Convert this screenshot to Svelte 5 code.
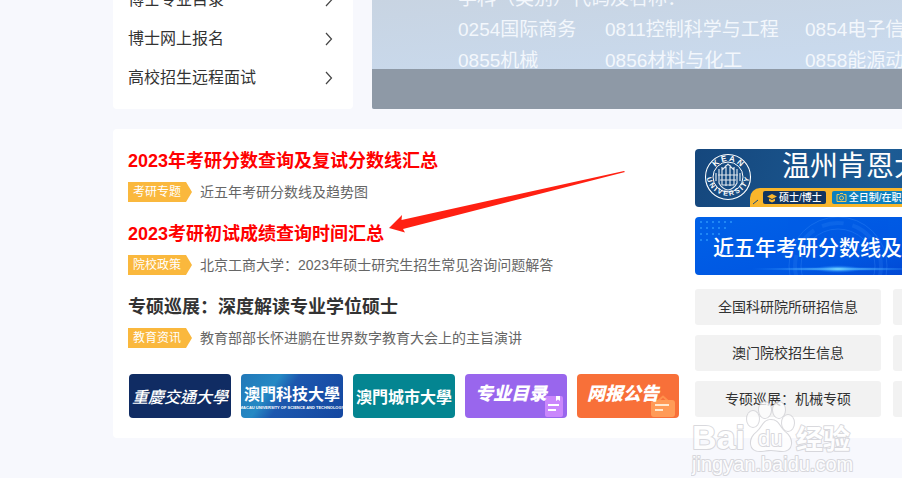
<script>
  const menu = ['博士专业目录', '博士网上报名', '高校招生远程面试'];
  const subjects = ['0254国际商务', '0811控制科学与工程', '0854电子信息', '0855机械', '0856材料与化工', '0858能源动力'];
  const articles = [
    { title: '2023年考研分数查询及复试分数线汇总', tag: '考研专题', text: '近五年考研分数线及趋势图', hot: true },
    { title: '2023考研初试成绩查询时间汇总', tag: '院校政策', text: '北京工商大学：2023年硕士研究生招生常见咨询问题解答', hot: true },
    { title: '专硕巡展：深度解读专业学位硕士', tag: '教育资讯', text: '教育部部长怀进鹏在世界数字教育大会上的主旨演讲', hot: false }
  ];
  const quick = ['全国科研院所研招信息', '', '澳门院校招生信息', '', '专硕巡展：机械专硕', ''];
</script>

<div class="page">
  <div class="wrap">
    <div class="top">
      <nav class="menu">
        {#each menu as item}
          <a href="#menu">
            {item}
            <svg width="8" height="14" viewBox="0 0 8 14" fill="none" stroke="#444" stroke-width="1.2"><path d="M1 1l5.500 6L1 13" /></svg>
          </a>
        {/each}
      </nav>
      <section class="hero">
        <p>学科（类别）代码及名称：</p>
        <div class="subjects">
          {#each subjects as s}<span>{s}</span>{/each}
        </div>
        <div class="caption"></div>
      </section>
    </div>

    <main class="card">
      <div class="news">
        {#each articles as a}
          <article>
            <h2><a href="#news" class:hot={a.hot}>{a.title}</a></h2>
            <div class="meta"><span class="tag">{a.tag}</span><a href="#detail">{a.text}</a></div>
          </article>
        {/each}
        <div class="thumbs">
          <a href="#cq" class="thumb navy"><span class="brush">重慶交通大學</span></a>
          <a href="#must" class="thumb blue"><span>澳門科技大學</span><small>MACAU UNIVERSITY OF SCIENCE AND TECHNOLOGY</small></a>
          <a href="#city" class="thumb teal"><span>澳門城市大學</span></a>
          <a href="#majors" class="thumb purple">
            <svg width="20" height="24" viewBox="0 0 20 24"><rect x="1" y="2" width="18" height="21" rx="2" fill="#ca87fc" /><path d="M12 2h4v5l-2-1.500L12 7zM4 10h11v2H4zM4 15h8v2H4z" fill="#fff" /></svg>
            <span>专业目录</span>
          </a>
          <a href="#notice" class="thumb orange">
            <svg width="26" height="24" viewBox="0 0 26 24"><path d="M8 7l5-4.500 5 4.500" fill="none" stroke="#ff914d" stroke-width="2" /><rect x="1" y="6" width="24" height="17" rx="3" fill="#ff9b57" /><path d="M5 10h14v2H5zM5 15h8v2H5z" fill="#ffe9cf" /></svg>
            <span>网报公告</span>
          </a>
        </div>
      </div>

      <aside>
        <a href="#kean" class="ad kean">
          <svg class="seal" width="48" height="48" viewBox="0 0 48 48" fill="none" stroke="#fff">
            <defs>
              <path id="sealTop" d="M8 24a16 16 0 0 1 32 0" />
              <path id="sealBottom" d="M2.500 18a21.700 21.700 0 1 0 43 0" />
            </defs>
            <circle cx="24" cy="24" r="22.500" stroke-width="1.100" />
            <circle cx="24" cy="24" r="15" stroke-width="1" />
            <path d="M15 16v14q3 6 9 7q6-1 9-7V16M18 14v18M22 12v21M26 12v21M30 14v18M14 22h20M16 27h16M18 32h12M18 17l6-6 6 6M12 20v8M36 20v8" stroke-width="1.200" opacity=".85" />
            <g fill="#fff" stroke="none" font-family="Liberation Sans, sans-serif" font-size="8" font-weight="bold" text-anchor="middle">
              <text><textPath href="#sealTop" startOffset="50%">K E A N</textPath></text>
              <text font-size="7"><textPath href="#sealBottom" startOffset="50%">U N I V E R S I T Y</textPath></text>
            </g>
          </svg>
          <div class="keanbody">
            <strong>温州肯恩大学</strong>
            <div class="strip">
              <svg class="mark" width="6" height="6" viewBox="0 0 6 6"><path d="M0 5l5-4" stroke="#174b80" /></svg>
              <span class="pill dark">
                <svg width="10" height="10" viewBox="0 0 10 10" fill="#f9b62b"><path d="M0 3.500L5 1l5 2.500L5 6zM2 5.500l3 1.500 3-1.500V8L5 9.500 2 8z" /></svg>硕士/博士</span>
              <span class="pill">
                <svg width="11" height="10" viewBox="0 0 11 10" fill="none" stroke="#f0c75a"><path d="M3.500 1.500H1v7h9v-7H7.500M4 .5h3" /><circle cx="5.500" cy="5" r="2" /></svg>全日制/在职</span>
            </div>
          </div>
        </a>
        <a href="#trend" class="ad trend">
          <svg class="tech" width="384" height="58" viewBox="0 0 384 58" fill="none">
            <defs>
              <radialGradient id="glow"><stop offset="0" stop-color="#7adcff" /><stop offset="1" stop-color="#1f86ff" stop-opacity="0" /></radialGradient>
            </defs>
            <g stroke="#4b9cff" opacity=".25"><circle cx="143" cy="49" r="49" /><circle cx="143" cy="49" r="37" /><circle cx="143" cy="49" r="43" stroke-width="4" stroke-dasharray="22 9" opacity=".6" /></g>
            <path d="M5 5h36M5 11h28M5 17h20M5 23h12" stroke="#34a2ff" stroke-width="2" stroke-dasharray="2 4" opacity=".6" />
            <ellipse cx="143" cy="52" rx="90" ry="2" fill="url(#glow)" /><ellipse cx="143" cy="52" rx="24" ry="4" fill="url(#glow)" />
          </svg>
          <span>近五年考研分数线及趋势图</span>
        </a>
        <div class="quick">
          {#each quick as q}<a href="#quick">{q}</a>{/each}
        </div>
      </aside>
    </main>
  </div>

  <svg class="arrow" width="238" height="62" viewBox="0 0 238 62"><path d="M1 57L14 44l-.5 5L236 0l1 1L15 58l2 3.500z" fill="#ff2012" /></svg>

  <svg class="watermark" width="166" height="78" viewBox="0 0 166 78" fill="#fff" stroke="#cdcdd2" stroke-width="2" stroke-linejoin="round" paint-order="stroke" font-family="Liberation Sans, Noto Sans CJK SC, sans-serif">
    <text x="1" y="48" font-size="34" font-weight="bold">Bai</text>
    <ellipse cx="62" cy="18" rx="6" ry="8" />
    <ellipse cx="74" cy="9" rx="6" ry="8" />
    <ellipse cx="88" cy="9" rx="6" ry="8" />
    <ellipse cx="97" cy="22" rx="6" ry="8" />
    <path d="M80 19c-8 0-8 7-14 12-9 7-8 19 3 19 4 0 7-1 11-1s7 1 11 1c11 0 12-12 3-19-6-5-6-12-14-12z" />
    <text x="67" y="45" font-size="22">du</text>
    <text x="105" y="48" font-size="27" font-weight="bold">经验</text>
    <text x="1" y="70" font-size="20">jingyan.baidu.com</text>
  </svg>
</div>

<style>
  :global(body) { background: #fff; overflow: hidden; }
  .page {
    position: relative;
    overflow: hidden;
    background: #f7f8fd;
    padding: 0 0 40px 113px;
    font-family: "Liberation Sans", "Noto Sans CJK SC", sans-serif;
    color: #333;
  }
  a { color: inherit; text-decoration: none; }
  .wrap { min-width: 982px; }
  .top { display: flex; gap: 19px; height: 109px; margin-bottom: 20px; align-items: flex-end; overflow: hidden; }
  .menu { flex: none; width: 240px; box-sizing: border-box; padding: 0 20px 12px 15px; background: #fff; border-radius: 0 0 4px 4px; }
  .menu a { display: flex; align-items: center; justify-content: space-between; height: 39px; font-size: 16px; line-height: 20px; color: #333; }
  .hero {
    position: relative;
    flex: 1;
    display: flex;
    flex-direction: column;
    justify-content: flex-end;
    align-self: stretch;
    box-sizing: border-box;
    padding: 0 0 33px 86px;
    background: linear-gradient(175deg, #c8d4e2, #c9daee 60%);
    color: #f3f7fc;
    font-size: 19px;
    line-height: 31px;
    border-radius: 0 0 2px 2px;
    overflow: hidden;
  }
  .hero p { margin: 0; }
  .subjects { display: grid; grid-template-columns: 147px 200px auto; }
  .caption { position: absolute; left: 0; right: 0; bottom: 0; height: 40px; background: #8e99a6; }

  .card { display: flex; gap: 16px; padding: 20px 16px; background: #fff; border-radius: 4px; }
  .news { flex: none; width: 551px; margin-left: -1px; }
  article { margin-bottom: 20px; }
  h2 { margin: 0 0 9px; font-size: 18px; line-height: 24px; }
  .hot { color: #f00; }
  .meta { display: flex; gap: 8px; font-size: 14px; line-height: 20px; color: #666; }
  .tag { width: 64px; box-sizing: border-box; padding-left: 5px; background: #fab83d; color: #fff; font-size: 12px; clip-path: polygon(0 0, 58px 0, 100% 50%, 58px 100%, 0 100%); }
  .thumbs { display: flex; gap: 10px; margin: 26px 0 0 1px; }
  .thumb {
    position: relative;
    display: flex;
    flex: 1;
    flex-direction: column;
    align-items: center;
    justify-content: center;
    height: 44px;
    border-radius: 4px;
    overflow: hidden;
    white-space: nowrap;
    color: #fff;
    font-family: "Noto Sans CJK TC", sans-serif;
    font-size: 16px;
    line-height: 24px;
    font-weight: 700;
  }
  .navy { background: #102c63; }
  .brush { font-style: italic; font-weight: 500; }
  .blue { background: linear-gradient(125deg, #2278b8, #2589c4 30%, #1c57ae 45%, #1447a0); }
  .blue small { font: bold 4px/6px "Liberation Sans", sans-serif; }
  .teal { background: #048591; }
  .purple { background: #9966ed; }
  .orange { background: #f87039; }
  .purple, .orange { align-items: flex-start; font-family: "Noto Sans CJK SC", sans-serif; font-size: 18px; font-weight: 900; font-style: italic; }
  .purple span, .orange span { position: relative; padding: 0 0 8px 10px; }
  .thumb svg { position: absolute; right: 3px; bottom: 0; }

  aside { flex: 1; min-width: 384px; }
  .ad { position: relative; display: flex; align-items: center; height: 58px; margin-bottom: 10px; border-radius: 4px; overflow: hidden; color: #fff; white-space: nowrap; }
  .kean { background: linear-gradient(100deg, #15477d, #1c5b94 50%, #174a80); align-items: stretch; }
  .seal { flex: none; margin: 4px 0 0 9px; }
  .keanbody { flex: 1; display: flex; flex-direction: column; justify-content: space-between; }
  .keanbody strong { padding-left: 30px; font-size: 28px; line-height: 36px; font-weight: 400; }
  .strip { display: flex; align-items: center; gap: 6px; height: 15px; padding: 2px 0 2px 3px; margin-left: -2px; border-top-left-radius: 10px; background: #f9b62b; }
  .mark { align-self: flex-end; }
  .pill { display: flex; align-items: center; gap: 2px; height: 13px; padding: 0 4px; border-radius: 2px; background: #0d80bd; font-size: 10px; line-height: 13px; font-weight: 500; }
  .pill:first-of-type { margin-left: -2px; }
  .dark { background: #12355f; }
  .trend { margin-bottom: 14px; background: linear-gradient(165deg, #0061e8, #0057e2 50%, #0434c0); font-size: 21px; font-weight: 500; }
  .trend span { position: relative; padding-left: 18px; }
  .tech { position: absolute; left: 0; top: 0; }
  .quick { display: grid; grid-template-columns: 1fr 1fr; gap: 10px 12px; }
  .quick a { height: 36px; border-radius: 3px; background: #f2f2f2; font-size: 14px; line-height: 36px; text-align: center; color: #333; }

  .arrow { position: absolute; left: 388px; top: 171px; }
  .watermark { position: absolute; left: 691px; top: 401px; opacity: .75; }
</style>
